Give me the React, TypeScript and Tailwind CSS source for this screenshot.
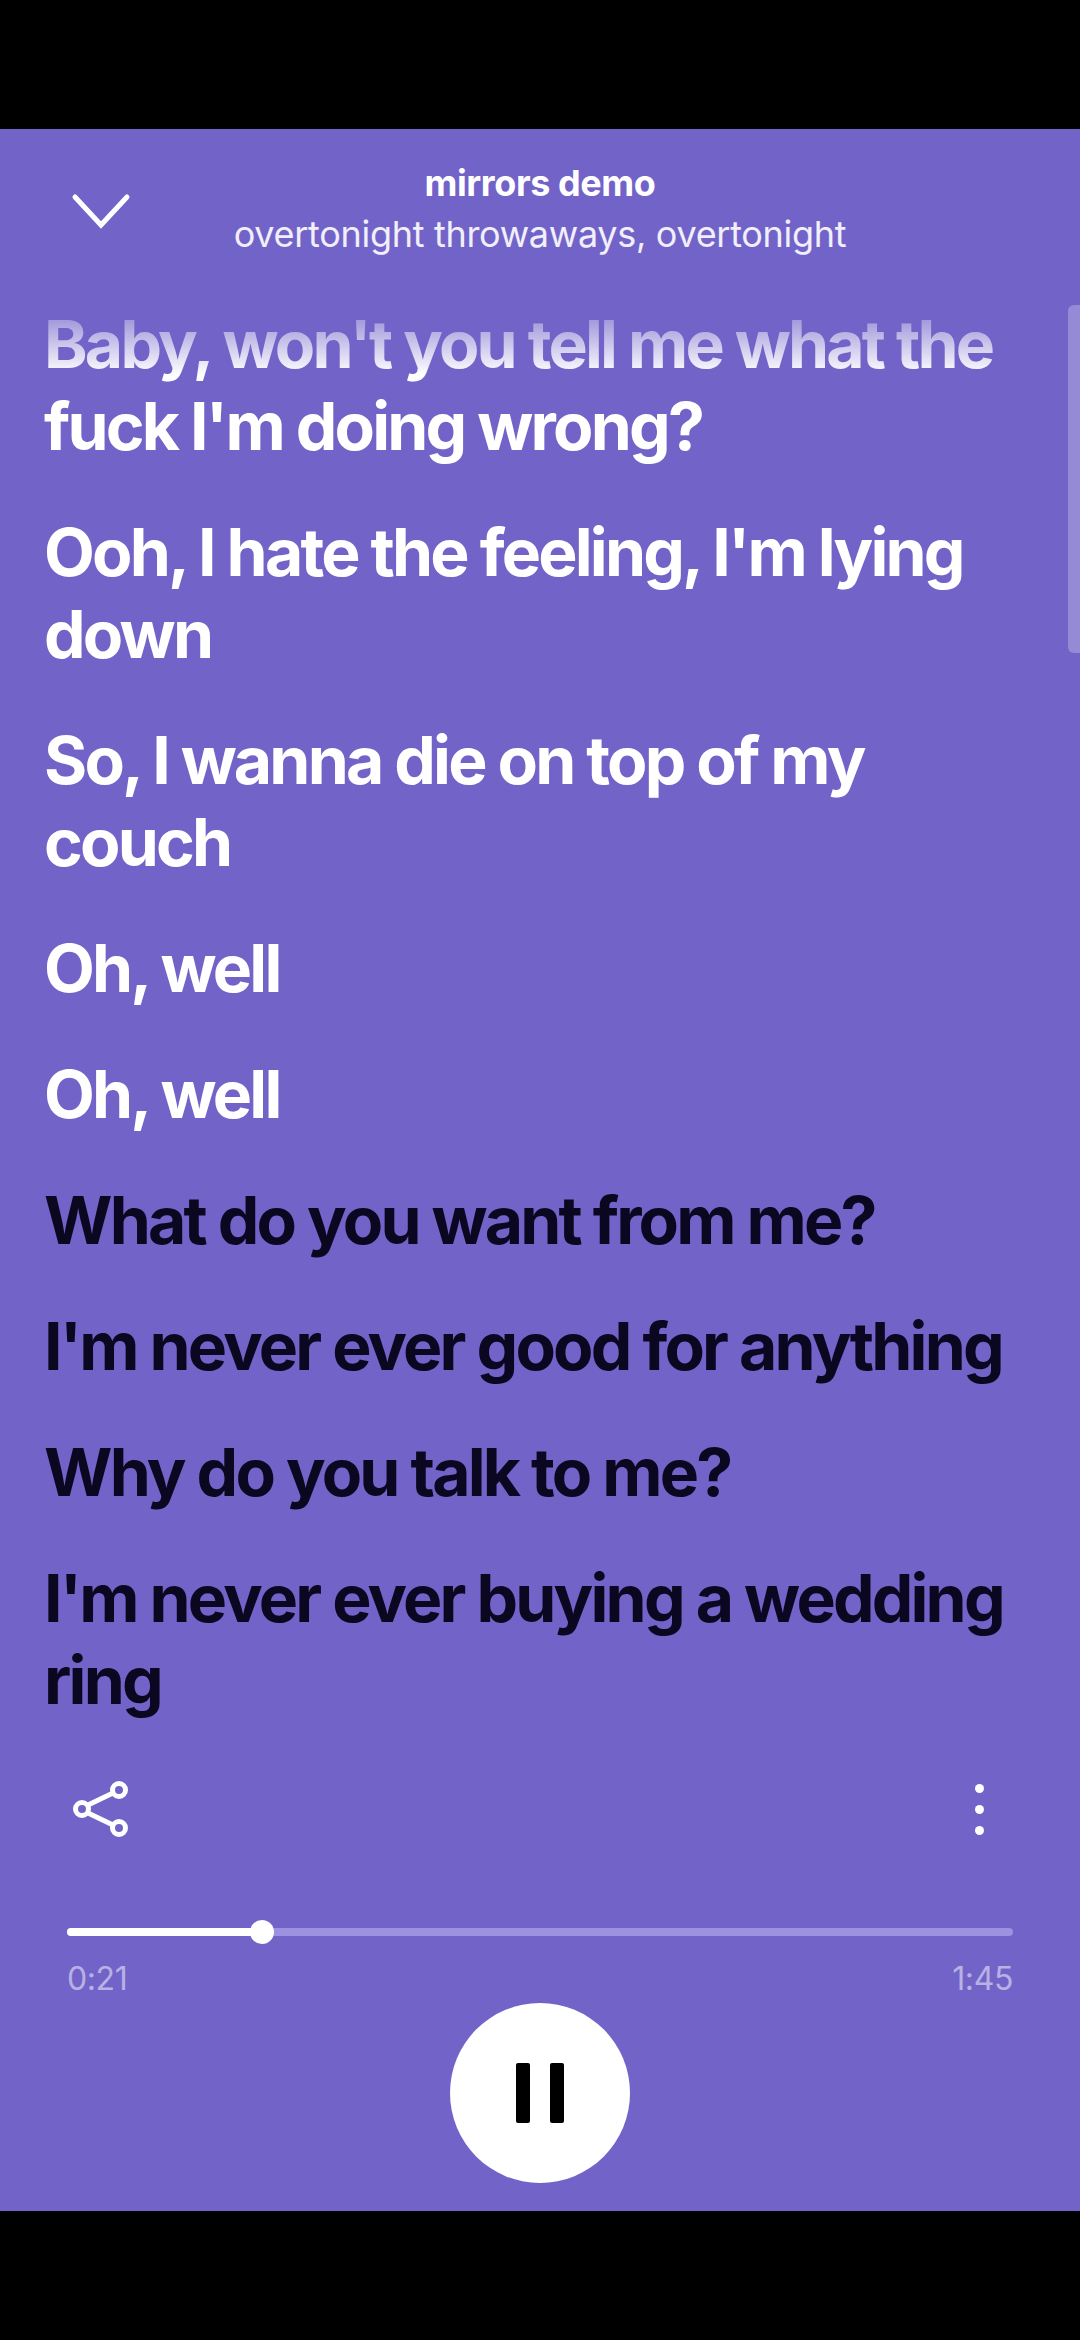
const font = "font-['Inter','Liberation_Sans',sans-serif]"

const lyrics = [
  { text: "Baby, won't you tell me what the fuck I'm doing wrong?", sung: true },
  { text: "Ooh, I hate the feeling, I'm lying down", sung: true },
  { text: 'So, I wanna die on top of my couch', sung: true },
  { text: 'Oh, well', sung: true },
  { text: 'Oh, well', sung: true },
  { text: 'What do you want from me?', sung: false },
  { text: "I'm never ever good for anything", sung: false },
  { text: 'Why do you talk to me?', sung: false },
  { text: "I'm never ever buying a wedding ring", sung: false },
]

export default function App() {
  return (
    <div className={`flex h-[2340px] w-[1080px] flex-col bg-black ${font}`}>
      <div className="h-[129px] shrink-0" />
      <main className="relative flex flex-1 flex-col overflow-hidden bg-[#7263c9]">
        <header className="relative flex h-[170px] shrink-0 flex-col items-center pt-[31px] text-white">
          <svg
            className="absolute left-[71px] top-[64px]"
            width="60"
            height="36"
            viewBox="0 0 60 36"
            fill="none"
            stroke="currentColor"
            strokeWidth="5"
            strokeLinecap="round"
          >
            <path d="M4 4 L30 32 L56 4" />
          </svg>
          <div className="text-[36px] font-bold leading-[46px] tracking-[-0.4px]">mirrors demo</div>
          <div className="mt-[5px] text-[36px] leading-[46px] tracking-[-0.3px] text-white/90">
            overtonight throwaways, overtonight
          </div>
        </header>

        <div className="absolute right-0 top-[176px] h-[348px] w-[12px] rounded-l-md bg-white/25" />

        <section className="flex h-[1481px] shrink-0 flex-col gap-[44px] overflow-hidden pl-[44px] pr-[56px] pt-[4px]">
          {lyrics.map((line, i) => (
            <p
              key={i}
              className={`text-[66px] font-bold leading-[82px] tracking-[-2.8px] ${
                line.sung ? 'text-white' : 'text-[#0b0720]'
              } ${i === 0 ? '[mask-image:linear-gradient(to_bottom,rgba(0,0,0,0.15)_0px,rgba(0,0,0,1)_72px)]' : ''}`}
            >
              {line.text}
            </p>
          ))}
        </section>

        <div className="flex shrink-0 items-center justify-between pl-[73px] pr-[96px] text-white">
          <svg width="56" height="58" viewBox="0 0 56 58" fill="none" stroke="currentColor" strokeWidth="5">
            <circle cx="9" cy="29" r="6.5" />
            <circle cx="46" cy="10" r="6.5" />
            <circle cx="46" cy="48" r="6.5" />
            <path d="M15 25 L40 13 M15 33 L40 45" />
          </svg>
          <div className="flex flex-col gap-[12px]">
            <span className="h-[9px] w-[9px] rounded-full bg-white" />
            <span className="h-[9px] w-[9px] rounded-full bg-white" />
            <span className="h-[9px] w-[9px] rounded-full bg-white" />
          </div>
        </div>

        <div className="mt-[90px] px-[67px]">
          <div className="relative h-[8px] rounded-full bg-[#9d91e2]">
            <div className="h-full w-[195px] rounded-l-full bg-white" />
            <div className="absolute left-[183px] top-[-8px] h-[24px] w-[24px] rounded-full bg-white" />
          </div>
          <div className="mt-[25px] flex justify-between text-[32px] leading-[36px] tracking-[-0.4px] text-white/50">
            <span>0:21</span>
            <span>1:45</span>
          </div>
        </div>

        <div className="mt-[6px] flex justify-center">
          <button className="flex h-[180px] w-[180px] items-center justify-center gap-[20px] rounded-full bg-white">
            <span className="h-[60px] w-[14px] rounded-[2px] bg-black" />
            <span className="h-[60px] w-[14px] rounded-[2px] bg-black" />
          </button>
        </div>
      </main>
      <div className="h-[129px] shrink-0" />
    </div>
  )
}
